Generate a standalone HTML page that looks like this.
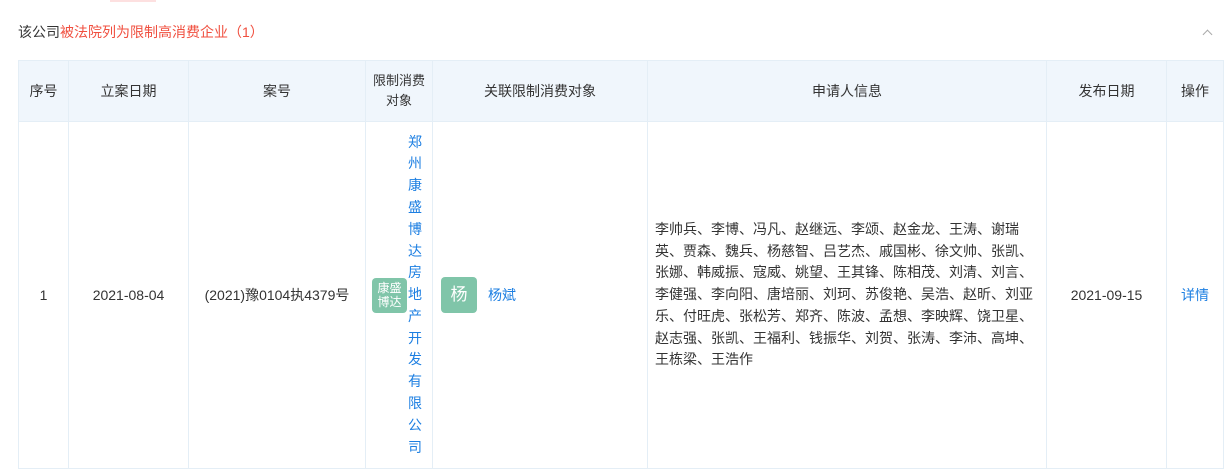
<!DOCTYPE html>
<html><head><meta charset="utf-8"><style>
*{margin:0;padding:0;box-sizing:border-box}
body{width:1232px;height:476px;background:#fff;font-family:"Liberation Sans","Noto Sans CJK SC",sans-serif;font-size:14px;color:#333;position:relative;overflow:hidden}
.top{position:absolute;left:110px;top:0;width:46px;height:2px;background:#fde0e0}
.title{position:absolute;left:18px;top:22px;font-size:14px;color:#333}
.title .r{color:#f04f3f}
.arr{position:absolute;left:1204px;top:31px;width:7px;height:7px;border-left:1px solid #aaa;border-top:1px solid #aaa;transform:rotate(45deg)}
table{position:absolute;left:18px;top:60px;border-collapse:collapse;table-layout:fixed;width:1205px}
td,th{border:1px solid #e4eef6;font-weight:normal;text-align:center;font-size:14px}
th{background:#f0f6fc;height:61px;line-height:22px;color:#333}
th.s{font-size:13px;line-height:20px}
td{height:347px;color:#333}
a{color:#1d7fe2;text-decoration:none}
.badge{display:inline-block;width:35px;height:35px;border-radius:4px;background:#80c5a9;color:#fff;font-size:12px;line-height:14px;padding-top:3px;vertical-align:middle}
.vt{display:inline-block;width:15px;font-size:14px;line-height:21.8px;color:#1d7fe2;vertical-align:middle;text-align:left;margin-left:1px}
.av{display:inline-block;width:36px;height:36px;border-radius:4px;background:#80c5a9;color:#fff;font-size:17px;line-height:36px;text-align:center;vertical-align:middle}
.ap{text-align:left;padding-left:7px;line-height:21.7px;white-space:nowrap}
</style></head><body>
<div class="top"></div>
<div class="title">该公司<span class="r">被法院列为限制高消费企业（1）</span></div>
<div class="arr"></div>
<table>
<colgroup><col style="width:50px"><col style="width:120px"><col style="width:177px"><col style="width:67px"><col style="width:215px"><col style="width:399px"><col style="width:120px"><col style="width:57px"></colgroup>
<tr><th>序号</th><th>立案日期</th><th>案号</th><th class="s">限制消费<br>对象</th><th>关联限制消费对象</th><th>申请人信息</th><th>发布日期</th><th>操作</th></tr>
<tr><td>1</td><td>2021-08-04</td><td>(2021)豫0104执4379号</td>
<td style="padding-left:6px;text-align:left"><span class="badge" style="text-align:center">康盛<br>博达</span><span class="vt">郑州康盛博达房地产开发有限公司</span></td>
<td style="text-align:left;padding-left:8px"><span class="av">杨</span><a style="margin-left:11px;vertical-align:middle">杨斌</a></td>
<td class="ap">李帅兵、李博、冯凡、赵继远、李颂、赵金龙、王涛、谢瑞<br>英、贾森、魏兵、杨慈智、吕艺杰、戚国彬、徐文帅、张凯、<br>张娜、韩威振、寇威、姚望、王其锋、陈相茂、刘清、刘言、<br>李健强、李向阳、唐培丽、刘珂、苏俊艳、吴浩、赵昕、刘亚<br>乐、付旺虎、张松芳、郑齐、陈波、孟想、李映辉、饶卫星、<br>赵志强、张凯、王福利、钱振华、刘贺、张涛、李沛、高坤、<br>王栋梁、王浩作</td>
<td>2021-09-15</td><td><a>详情</a></td></tr>
</table>
</body></html>
